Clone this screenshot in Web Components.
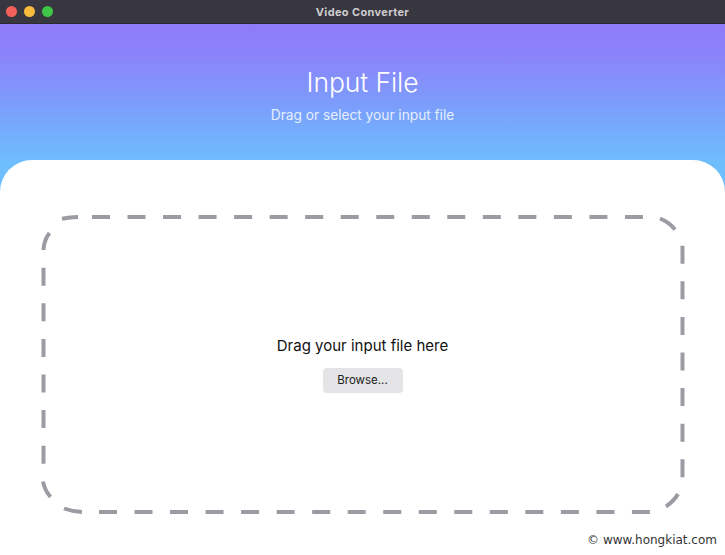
<!DOCTYPE html>
<html lang="en"><head><meta charset="utf-8"><title>Video Converter</title>
<style>
html,body{margin:0;padding:0;height:100%;background:#fff;overflow:hidden}
body{font-family:Inter,"Liberation Sans",sans-serif}
</style></head><body>
<vc-window>
  <vc-titlebar slot="bar">Video Converter</vc-titlebar>
  <vc-hero slot="hero" subtitle="Drag or select your input file">Input File</vc-hero>
  <vc-dropzone slot="body" label="Drag your input file here"><vc-button>Browse...</vc-button></vc-dropzone>
  <vc-watermark slot="foot">© www.hongkiat.com</vc-watermark>
</vc-window>
<script>
function def(name,html,init){
  customElements.define(name,class extends HTMLElement{
    constructor(){super();this.attachShadow({mode:'open'}).innerHTML=html;}
    connectedCallback(){if(init)init(this);}
  });
}
def('vc-window',`<style>
:host{display:flex;flex-direction:column;width:725px;height:555px;position:relative;overflow:hidden;background:#fff}
.head{background:linear-gradient(180deg,#8f7bf8 0,#8b82f9 28px,#7f97fb 70px,#74aefc 110px,#6ebefd 140px);height:176px;flex:none;display:flex;flex-direction:column}
.sheet{background:#fff;border-radius:32px 32px 0 0;margin-top:-40px;flex:1;display:flex;flex-direction:column;padding:55px 41px 0 41px;position:relative}
</style>
<slot name="bar"></slot>
<div class="head"><slot name="hero"></slot></div>
<div class="sheet"><slot name="body"></slot><slot name="foot"></slot></div>`);
def('vc-titlebar',`<style>
:host{display:flex;align-items:center;justify-content:center;height:24px;flex:none;background:#38363e;position:relative;
 color:#cfcdd2;font:700 11px/1 Inter,"Liberation Sans",sans-serif;letter-spacing:.35px;box-shadow:inset 0 -1px 0 #2c2a30}
.lights{position:absolute;left:6px;top:6px;display:flex;gap:7px}
i{display:block;width:11px;height:11px;border-radius:50%}
</style>
<div class="lights"><i style="background:#f4605a"></i><i style="background:#f8bb3c"></i><i style="background:#3fc547"></i></div>
<span><slot></slot></span>`);
def('vc-hero',`<style>
:host{display:flex;flex-direction:column;align-items:center;color:#fff;font-family:Inter,"Liberation Sans",sans-serif}
h1{margin:41px 0 0;font-size:26.5px;font-weight:300;line-height:34px;letter-spacing:-.1px}
p{margin:7px 0 0;font-size:13.8px;font-weight:400;line-height:18px;color:#e4eeff;letter-spacing:-.05px}
</style><h1><slot></slot></h1><p id="s"></p>`,el=>{el.shadowRoot.getElementById('s').textContent=el.getAttribute('subtitle')});
def('vc-dropzone',`<style>
:host{display:flex;flex-direction:column;align-items:center;justify-content:center;width:643px;height:299px;flex:none;position:relative;box-sizing:border-box;color:#111;font-family:Inter,"Liberation Sans",sans-serif}
svg{position:absolute;left:0;top:0;overflow:visible}
p{margin:0 0 12px;font-size:15px;line-height:20px;font-weight:400;position:relative}
</style>
<svg width="643" height="299" viewBox="41 215 643 299" aria-hidden="true"><path id="d" fill="none" stroke="#9b9ba3" stroke-width="4"/></svg>
<p id="l"></p><slot></slot>`,el=>{
  const r=el.shadowRoot;
  r.getElementById('l').textContent=el.getAttribute('label');
  let d='M62 218.8Q70 217 78 217M43.5 250Q44 240 49.5 233M660 218.5Q669 222 675 229.5M678 494Q674 501 666 506.5M43 481.5Q44.5 490 50.5 497M64 508.5Q72 511.5 82 512';
  for(let k=0;k<16;k++){const a=92+35.53*k,b=99+35.53*k;d+=`M${a} 217h18M${b} 512h18`;}
  for(let k=0;k<6;k++){d+=`M43.5 ${267.7+35.6*k}v18`;}
  for(let k=0;k<7;k++){d+=`M682.5 ${245.7+35.6*k}v18`;}
  r.getElementById('d').setAttribute('d',d);
});
def('vc-button',`<style>
:host{display:inline-flex;align-items:center;justify-content:center;width:80px;height:25px;background:#e4e4e6;border-radius:4px;color:#222;font:400 11.5px/1 Inter,"Liberation Sans",sans-serif;position:relative}
</style><slot></slot>`);
def('vc-watermark',`<style>
:host{display:block;align-self:flex-end;margin:18px -33px 0 0;font:400 12px/16px "DejaVu Sans",sans-serif;color:#333}
</style><slot></slot>`);
</script>
</body></html>
